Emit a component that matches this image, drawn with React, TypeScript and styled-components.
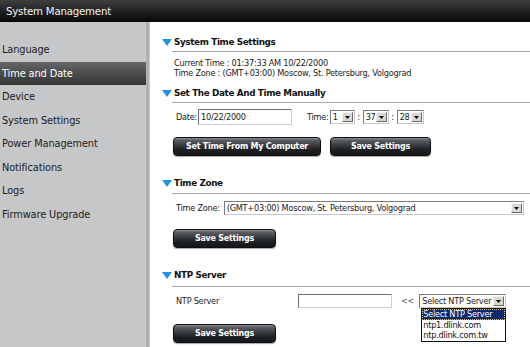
import React from "react";
import styled, { createGlobalStyle } from "styled-components";

const MENU = [
  "Language",
  "Time and Date",
  "Device",
  "System Settings",
  "Power Management",
  "Notifications",
  "Logs",
  "Firmware Upgrade",
];

const NTP_OPTIONS = ["Select NTP Server", "ntp1.dlink.com", "ntp.dlink.com.tw"];

const Triangle = () => (
  <svg width="10" height="7" viewBox="0 0 10 7">
    <polygon points="0,0 10,0 5,7" fill="#1f93e6" />
  </svg>
);

const Select = ({ value, width }: { value: string; width: number }) => (
  <SelectBox style={{ width }}>
    <SelectValue>{value}</SelectValue>
    <SelectArrow>
      <svg width="5" height="3" viewBox="0 0 5 3">
        <polygon points="0,0 5,0 2.5,3" fill="#000" />
      </svg>
    </SelectArrow>
  </SelectBox>
);

const App = () => {
  return (
    <>
      <GlobalStyle />
      <Page>
        <TopBar>System Management</TopBar>
        <Main>
          <Sidebar>
            {MENU.map((item) => (
              <MenuItem key={item} $active={item === "Time and Date"}>
                {item}
              </MenuItem>
            ))}
          </Sidebar>

          <Content>
            <SectionHead $top={0}>
              <Triangle />
              <HeadTitle>System Time Settings</HeadTitle>
            </SectionHead>
            <Rule $top={3} />
            <Info>
              <div>Current Time : 01:37:33 AM 10/22/2000</div>
              <div>Time Zone : (GMT+03:00) Moscow, St. Petersburg, Volgograd</div>
            </Info>

            <SectionHead $top={9}>
              <Triangle />
              <HeadTitle>Set The Date And Time Manually</HeadTitle>
            </SectionHead>
            <Rule $top={3} />
            <FormRow $top={6}>
              <Label>Date:</Label>
              <TextInput $width={94} $height={16}>10/22/2000</TextInput>
              <Label $left={15}>Time:</Label>
              <Select value="1" width={25} />
              <Colon>:</Colon>
              <Select value="37" width={26} />
              <Colon>:</Colon>
              <Select value="28" width={27} />
            </FormRow>
            <ButtonRow $top={12}>
              <Button $width={148}>Set Time From My Computer</Button>
              <Button $width={101}>Save Settings</Button>
            </ButtonRow>

            <SectionHead $top={21}>
              <Triangle />
              <HeadTitle>Time Zone</HeadTitle>
            </SectionHead>
            <Rule $top={4} />
            <FormRow $top={7}>
              <Label>Time Zone:</Label>
              <Spacer $w={3} />
              <Select value="(GMT+03:00) Moscow, St. Petersburg, Volgograd" width={300} />
            </FormRow>
            <ButtonRow $top={14}>
              <Button $width={103}>Save Settings</Button>
            </ButtonRow>

            <SectionHead $top={21}>
              <Triangle />
              <HeadTitle>NTP Server</HeadTitle>
            </SectionHead>
            <Rule $top={5} />
            <FormRow $top={7}>
              <Label $width={121}>NTP Server</Label>
              <TextInput $width={94} $height={14} />
              <Arrows>&lt;&lt;</Arrows>
              <DropWrap>
                <Select value="Select NTP Server" width={87} />
                <DropList>
                  {NTP_OPTIONS.map((o, i) => (
                    <DropItem key={o} $selected={i === 0}>
                      {o}
                    </DropItem>
                  ))}
                </DropList>
              </DropWrap>
            </FormRow>
            <ButtonRow $top={16}>
              <Button $width={103}>Save Settings</Button>
            </ButtonRow>
          </Content>
        </Main>
      </Page>
    </>
  );
};

export default App;

/*//////////////////////////////////////////////////////////////////////////
/////////////////////////////// S T Y L E  /////////////////////////////////
//////////////////////////////////////////////////////////////////////////*/

const GlobalStyle = createGlobalStyle`
  html, body {
    margin: 0;
    padding: 0;
    background: #ffffff;
  }
  body {
    font-family: "DejaVu Sans", Verdana, sans-serif;
  }
`;

const Page = styled.div`
  width: 530px;
  height: 347px;
  display: flex;
  flex-direction: column;
  overflow: hidden;
`;

const TopBar = styled.div`
  height: 22px;
  flex: none;
  display: flex;
  align-items: center;
  padding-left: 6px;
  background: linear-gradient(#3e3e3e, #1c1c1c 60%, #080808);
  color: #f4f4f4;
  font-size: 10.2px;
  letter-spacing: -0.2px;
`;

const Main = styled.div`
  flex: 1;
  display: flex;
`;

const Sidebar = styled.div`
  width: 150px;
  flex: none;
  padding-top: 16px;
  box-sizing: border-box;
  background: linear-gradient(
    to right,
    #c6c7c9 0,
    #c6c7c9 146px,
    #a4a5a7 147px,
    #b6b7b9 149px,
    #d8d8d8 150px
  );
`;

const MenuItem = styled.div<{ $active?: boolean }>`
  width: 146px;
  height: 23.5px;
  display: flex;
  align-items: center;
  padding-left: 2px;
  box-sizing: border-box;
  font-size: 9.8px;
  letter-spacing: -0.1px;
  color: ${(p) => (p.$active ? "#ffffff" : "#1c1c1c")};
  background: ${(p) =>
    p.$active ? "linear-gradient(#656668, #4a4b4d 50%, #333436)" : "transparent"};
`;

const Content = styled.div`
  flex: 1;
  padding: 14px 0 0 12px;
  font-size: 8.2px;
  letter-spacing: -0.25px;
  color: #222;
`;

const SectionHead = styled.div<{ $top: number }>`
  height: 12px;
  margin-top: ${(p) => p.$top}px;
  display: flex;
  align-items: center;
  gap: 2px;
`;

const HeadTitle = styled.span`
  font-weight: bold;
  font-size: 8.8px;
  letter-spacing: -0.35px;
  color: #111;
`;

const Rule = styled.div<{ $top: number }>`
  margin-top: ${(p) => p.$top}px;
  margin-left: 10px;
  border-top: 1px solid #a6a6a6;
`;

const Info = styled.div`
  margin-top: 6px;
  padding-left: 12px;
  line-height: 10px;
`;

const FormRow = styled.div<{ $top: number }>`
  margin-top: ${(p) => p.$top}px;
  padding-left: 14px;
  display: flex;
  align-items: center;
  min-height: 14px;
`;

const Label = styled.span<{ $left?: number; $width?: number }>`
  margin-left: ${(p) => p.$left ?? 0}px;
  width: ${(p) => (p.$width ? `${p.$width}px` : "auto")};
  margin-right: 1px;
  flex: none;
`;

const Spacer = styled.span<{ $w: number }>`
  width: ${(p) => p.$w}px;
  flex: none;
`;

const TextInput = styled.div<{ $width: number; $height: number }>`
  width: ${(p) => p.$width}px;
  height: ${(p) => p.$height}px;
  box-sizing: border-box;
  border: 1px solid;
  border-color: #6f6f6f #cfcfcf #cfcfcf #6f6f6f;
  background: #fff;
  padding-left: 2px;
  display: flex;
  align-items: center;
  flex: none;
`;

const SelectBox = styled.div`
  height: 14px;
  box-sizing: border-box;
  border: 1px solid;
  border-color: #7a7a7a #c8c8c8 #c8c8c8 #7a7a7a;
  background: #fff;
  display: flex;
  align-items: stretch;
  flex: none;
`;

const SelectValue = styled.span`
  flex: 1;
  padding-left: 2px;
  display: flex;
  align-items: center;
  white-space: nowrap;
  overflow: hidden;
`;

const SelectArrow = styled.span`
  width: 11px;
  margin: 1px;
  box-sizing: border-box;
  background: #d9d7d0;
  border: 1px solid;
  border-color: #f4f4f4 #6a6a6a #6a6a6a #f4f4f4;
  display: flex;
  align-items: center;
  justify-content: center;
`;

const Colon = styled.span`
  width: 8px;
  text-align: center;
  flex: none;
`;

const Arrows = styled.span`
  margin-left: 9px;
  margin-right: 5px;
  color: #555;
`;

const DropWrap = styled.div`
  position: relative;
`;

const DropList = styled.div`
  position: absolute;
  top: 100%;
  left: 2px;
  width: 85px;
  box-sizing: border-box;
  border: 1px solid #111;
  background: #fff;
  z-index: 2;
`;

const DropItem = styled.div<{ $selected?: boolean }>`
  height: 10.7px;
  line-height: 10.7px;
  padding-left: 1px;
  box-sizing: border-box;
  white-space: nowrap;
  color: ${(p) => (p.$selected ? "#ffffff" : "#111")};
  background: ${(p) => (p.$selected ? "#0b2a6e" : "transparent")};
  outline: ${(p) => (p.$selected ? "1px dotted #d8c27a" : "none")};
  outline-offset: -1px;
`;

const ButtonRow = styled.div<{ $top: number }>`
  margin-top: ${(p) => p.$top}px;
  padding-left: 11px;
  display: flex;
  gap: 9px;
`;

const Button = styled.div<{ $width: number }>`
  width: ${(p) => p.$width}px;
  height: 19px;
  box-sizing: border-box;
  border: 1px solid #0e0f10;
  border-radius: 4px;
  background: linear-gradient(#8c9093 0, #5c6064 12%, #34383b 45%, #1e2124 70%, #15171a 100%);
  box-shadow: 0 1px 1px rgba(0, 0, 0, 0.35);
  color: #ffffff;
  font-weight: bold;
  font-size: 8px;
  letter-spacing: -0.25px;
  display: flex;
  align-items: center;
  justify-content: center;
`;
